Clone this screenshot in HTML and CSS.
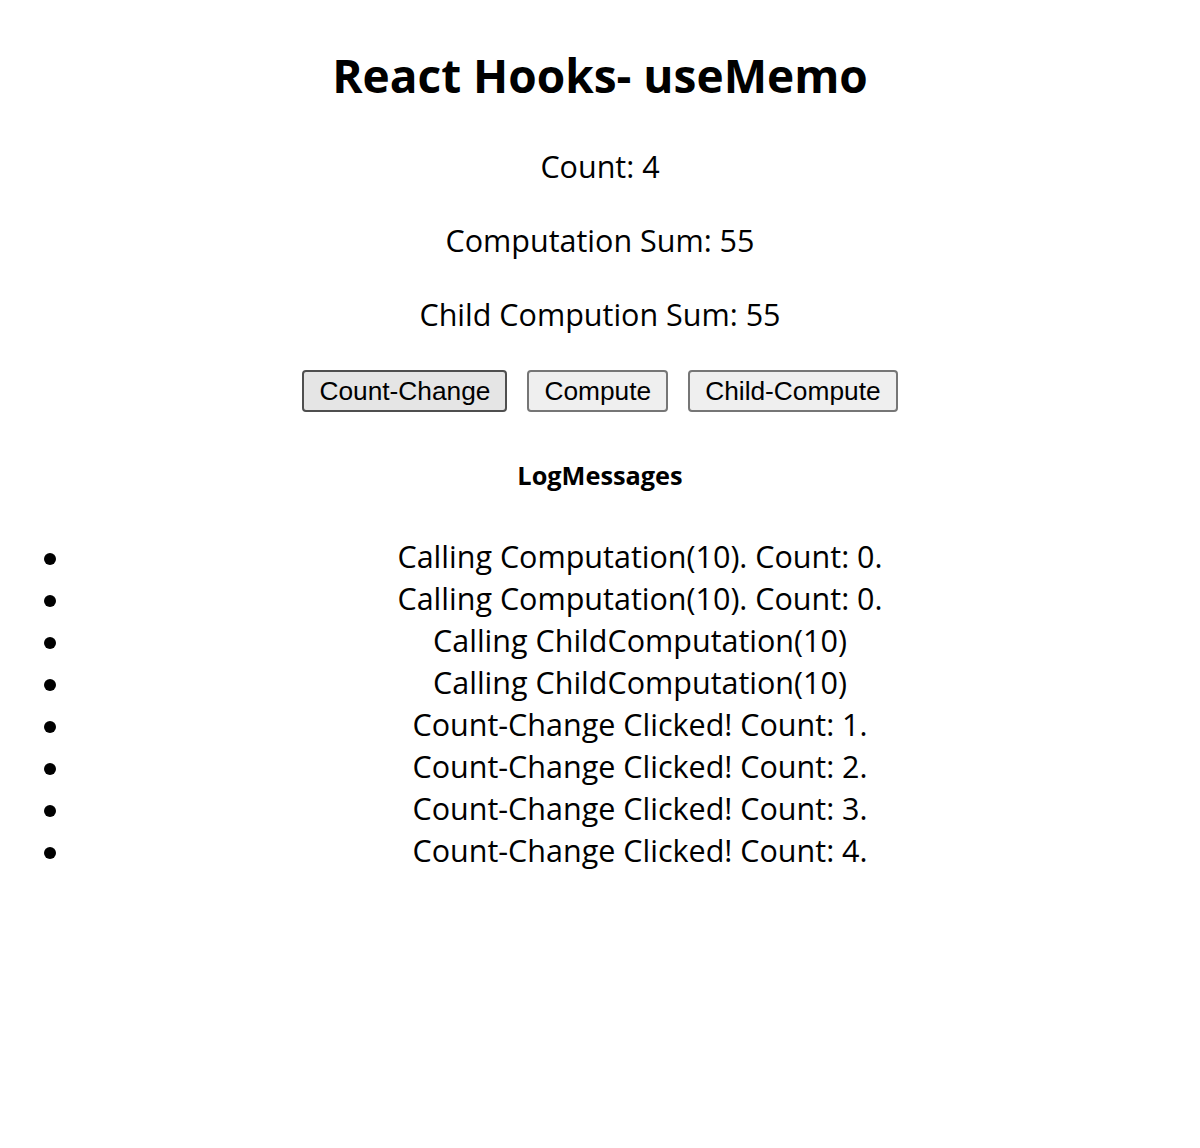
FILE: index.html
```html
<!DOCTYPE html>
<html lang="en">
<head>
<meta charset="utf-8">
<title>React Hooks- useMemo</title>
<link rel="stylesheet" href="styles.css">
</head>
<body>
<div class="app">
  <h1 class="title">React Hooks- useMemo</h1>
  <p class="stat stat-first">Count: 4</p>
  <p class="stat">Computation Sum: 55</p>
  <p class="stat">Child Compution Sum: 55</p>
  <div class="buttons">
    <button class="btn btn-active">Count-Change</button>
    <button class="btn">Compute</button>
    <button class="btn">Child-Compute</button>
  </div>
  <h3 class="log-title">LogMessages</h3>
  <ul class="log">
    <li class="log-item"><span class="log-text">Calling Computation(10). Count: 0.</span></li>
    <li class="log-item"><span class="log-text">Calling Computation(10). Count: 0.</span></li>
    <li class="log-item"><span class="log-text">Calling ChildComputation(10)</span></li>
    <li class="log-item"><span class="log-text">Calling ChildComputation(10)</span></li>
    <li class="log-item"><span class="log-text">Count-Change Clicked! Count: 1.</span></li>
    <li class="log-item"><span class="log-text">Count-Change Clicked! Count: 2.</span></li>
    <li class="log-item"><span class="log-text">Count-Change Clicked! Count: 3.</span></li>
    <li class="log-item"><span class="log-text">Count-Change Clicked! Count: 4.</span></li>
  </ul>
</div>
</body>
</html>
```
FILE: styles.css
```css
html, body {
  margin: 0;
  padding: 0;
  background: #ffffff;
}

.app {
  display: flow-root;
  padding: 0 8px;
  text-align: center;
  color: #000000;
  font-family: "Open Sans", "Noto Sans", sans-serif;
}

.title {
  margin: 43px 0 0;
  font-size: 46px;
  line-height: 64px;
  font-weight: 700;
}

.stat {
  margin: 32px 0 0;
  font-size: 30.5px;
  line-height: 42px;
  font-weight: 400;
}

.stat-first {
  margin-top: 38px;
}

.buttons {
  display: flex;
  justify-content: center;
  gap: 20px;
  margin-top: 35px;
}

.btn {
  box-sizing: border-box;
  height: 42px;
  padding: 0 15px;
  font-family: "Liberation Sans", Arial, sans-serif;
  font-size: 26.3px;
  line-height: 1;
  color: #000000;
  background: #efefef;
  border: 2px solid #767676;
  border-radius: 4px;
}

.btn-active {
  background: #e5e5e5;
  border-color: #4f4f4f;
}

.log-title {
  margin: 47px 0 0;
  font-size: 25.3px;
  line-height: 32px;
  font-weight: 700;
}

.log {
  list-style: none;
  margin: 44px 0 0;
  padding: 0;
}

.log-item {
  display: flex;
  align-items: center;
  font-size: 30.5px;
  line-height: 42px;
}

.log-item::before {
  content: "";
  flex: 0 0 12px;
  width: 12px;
  height: 12px;
  margin-left: 36px;
  margin-top: 6px;
  border-radius: 50%;
  background: #000000;
}

.log-text {
  flex: 1;
  margin-left: 32px;
  text-align: center;
}
```
